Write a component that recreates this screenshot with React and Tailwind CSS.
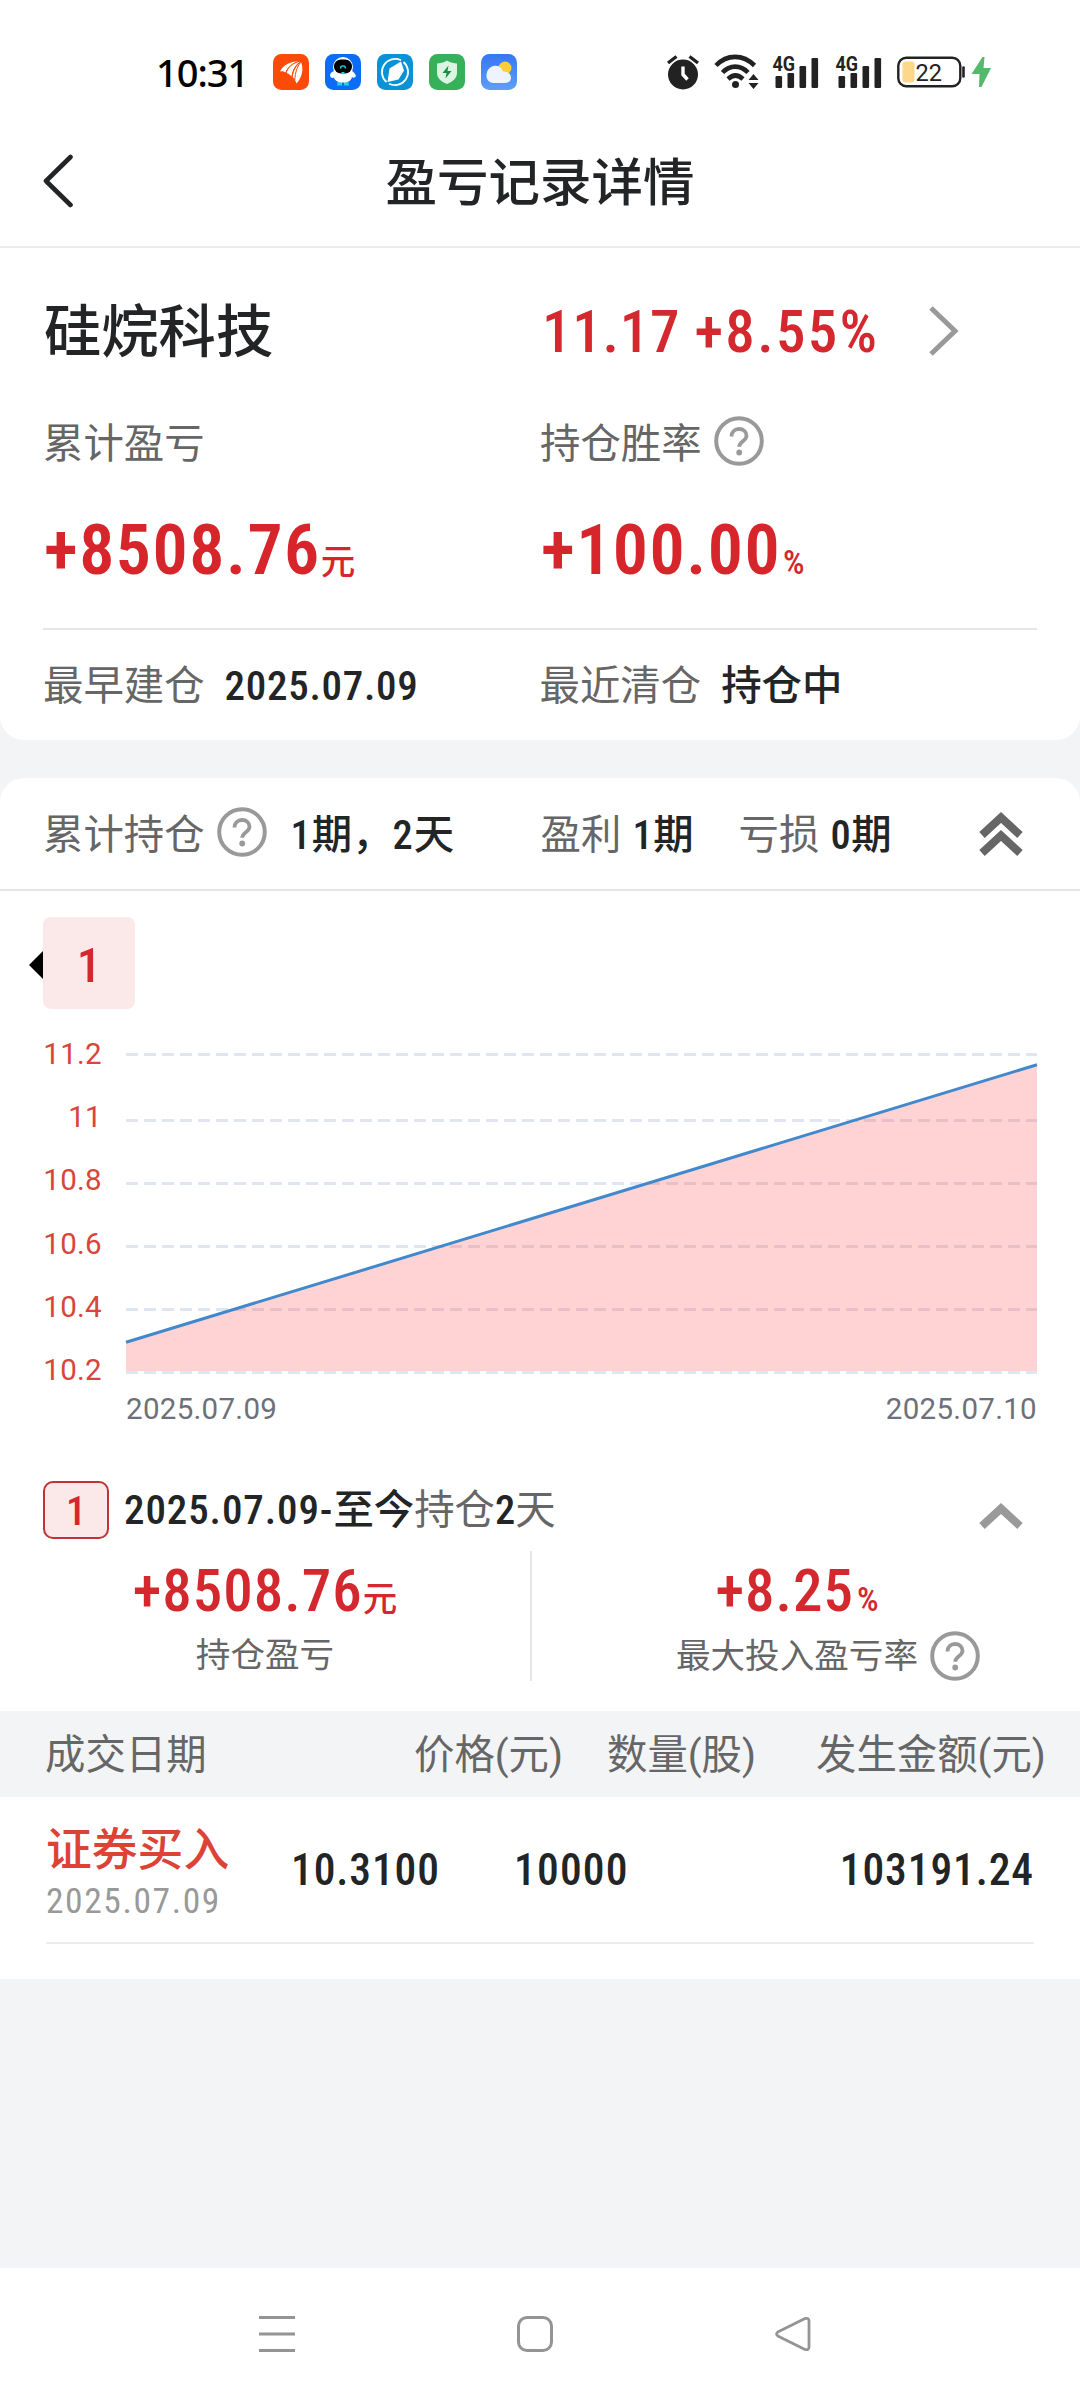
const grid = [
  { label: "11.2", y: 45.5 },
  { label: "11", y: 111.5 },
  { label: "10.8", y: 174.5 },
  { label: "10.6", y: 237.5 },
  { label: "10.4", y: 300.5 },
  { label: "10.2", y: 363.5 },
];

const trades = [
  {
    type: "证券买入",
    date: "2025.07.09",
    price: "10.3100",
    count: "10000",
    amount: "103191.24",
  },
];

// narrow digits used for prices, dates and counts
function Num({ className = "", children }) {
  return <span className={`font-[family-name:'Roboto_Condensed',Roboto,sans-serif] ${className}`}>{children}</span>;
}

function HelpIcon({ className = "" }) {
  return (
    <svg width="50" height="50" viewBox="0 0 50 50" fill="none" className={`shrink-0 ${className}`}>
      <circle cx="25" cy="25" r="22.8" stroke="#999" strokeWidth="4" />
      <path d="M17.5 20.5c0-4.6 3.2-7.500 7.500-7.500s7.500 2.800 7.500 6.800c0 5.400-7.300 5.600-7.300 11" stroke="#999" strokeWidth="3.800" />
      <circle cx="25.200" cy="36.500" r="2.900" fill="#999" />
    </svg>
  );
}

function Signal({ className = "" }) {
  return (
    <svg width="48" height="50" viewBox="0 -8 48 50" className={className}>
      <g fill="#222">
        <rect x="3.500" y="21" width="6.6" height="12" rx="1.2" />
        <rect x="15.500" y="18" width="6.6" height="15" rx="1.2" />
        <rect x="27.500" y="11" width="6.6" height="22" rx="1.2" />
        <rect x="39.500" y="3" width="6.6" height="30" rx="1.2" />
        <text x="0.500" y="16" fontSize="21" fontWeight="700" textLength="22.500" lengthAdjust="spacingAndGlyphs">4G</text>
      </g>
    </svg>
  );
}

function StatusBar() {
  return (
    <div className="flex items-center h-[115px] pt-[29px]">
      <span className="ml-[156px] w-[117px] text-[38px] leading-none font-medium tracking-[-1px] text-black font-[family-name:'Noto_Sans',sans-serif]">
        10:31
      </span>
      <div className="flex gap-4">
        <svg width="36" height="36" viewBox="0 0 36 36">
          <rect width="36" height="36" rx="8.5" fill="#fc4a08" />
          <g fill="#fff">
            <path d="M7 17.500C10 11 17 7.500 26 7.200C19 9.500 14.500 13 12.500 18.500C10.500 17.200 9 17 7 17.500z" />
            <path d="M13.500 19C15.500 13 20 9.300 27 7.600C22 11.500 19.500 16 18.500 22.500C17 20.500 15.500 19.500 13.500 19z" />
            <path d="M19.500 23C20.500 16.500 23 11.500 28 8C31 15 29 23.500 23.500 29.500C22.500 26.500 21.500 24.500 19.500 23z" />
          </g>
          <g stroke="#fc4a08" strokeWidth="1" fill="none">
            <path d="M21.800 26C22.300 18 24 13 27.600 8.500" />
            <path d="M12.800 19C15 13 19 9.500 26 7.300M19 23C20 16 23 11 27.500 8" />
          </g>
        </svg>
        <svg width="36" height="36" viewBox="0 0 36 36">
          <rect width="36" height="36" rx="8.5" fill="#0b6cf5" />
          <path d="M13 26h4v5.500h-5zM19 26h4l1 5.500h-5z" fill="#22d3e0" />
          <path d="M5 21c1-3 3-4 5-4h16c2 0 4 2 5 5-1 2-3 2-4 1-1 4-4 5.500-9 5.500S10 27 9 23.500c-2 1-4 0-4-2.500z" fill="#fff" />
          <circle cx="18" cy="13" r="10" fill="#fff" />
          <rect x="9" y="5.500" width="18" height="14" rx="6.800" fill="#000" />
          <path d="M15.500 14.500c0-3.500 5-3.500 5 0" stroke="#22d3e0" strokeWidth="1.400" fill="none" />
          <rect x="16.500" y="18" width="3" height="2.200" fill="#22d3e0" />
        </svg>
        <svg width="36" height="36" viewBox="0 0 36 36">
          <rect width="36" height="36" rx="8.5" fill="#0a92d6" />
          <path d="M24 6.200A13.200 13.200 0 0 0 9.500 28M12 29.800A13.200 13.200 0 0 0 26.500 8" stroke="#fff" strokeWidth="1.800" fill="none" />
          <path d="M24 7.500L27 16.500 21.500 25.500 10.500 28 12.500 14.500z" fill="#fff" />
        </svg>
        <svg width="36" height="36" viewBox="0 0 36 36">
          <rect width="36" height="36" rx="8.5" fill="#36b15a" />
          <path d="M18 6.500c3.500 2.300 7 3 10 3V19c0 5-4 8.500-10 11C12 27.500 8 24 8 19V9.500c3 0 6.500-.7 10-3z" fill="#dbf5e2" />
          <path d="M19.500 11.500L13.500 19h4l-1 5.500 6-7.500h-4z" fill="#169142" />
        </svg>
        <svg width="36" height="36" viewBox="0 0 36 36">
          <defs>
            <linearGradient id="sky" x1="0" y1="0" x2="0" y2="1">
              <stop offset="0" stopColor="#3675f3" />
              <stop offset="1" stopColor="#5d9ff7" />
            </linearGradient>
          </defs>
          <rect width="36" height="36" rx="8.5" fill="url(#sky)" />
          <circle cx="24" cy="14" r="6.500" fill="#fdcf35" />
          <path d="M12 29a7 7 0 0 1-6.500-8C6 14 11 11.500 15 11.700c4 .2 6 3 7 5.800 4-.5 8 2 8 6S27 29 24 29z" fill="#eef3fd" />
        </svg>
      </div>
      <svg width="34" height="36" viewBox="0 0 34 36" className="ml-[149px]">
        <circle cx="17" cy="20.500" r="15" fill="#222" />
        <path d="M2 9l8.500-6.500M32 9l-8.500-6.500" stroke="#222" strokeWidth="3.400" />
        <path d="M17 12.500v8l4.500 5" stroke="#fff" strokeWidth="3.400" fill="none" />
      </svg>
      <svg width="46" height="36" viewBox="0 0 46 36" className="ml-[14px]">
        <g stroke="#222" strokeWidth="4.600" fill="none">
          <path d="M2 11.500C13 0 29 0 40.500 11.500" />
          <path d="M8.500 18.500C16 10.700 26.500 10.700 34 18.500" />
          <path d="M14 25C19 20.300 24 20.300 29 25" />
        </g>
        <circle cx="21.500" cy="30.500" r="3.500" fill="#222" />
        <path d="M39.500 20l5 6h-10zM39.500 35l5-6h-10z" fill="#222" />
      </svg>
      <Signal className="ml-[12px]" />
      <Signal className="ml-[15px]" />
      <svg width="96" height="34" viewBox="0 0 96 34" className="ml-[14px]">
        <rect x="1.300" y="2.800" width="62" height="28.500" rx="8" fill="none" stroke="#222" strokeWidth="2.400" />
        <rect x="5.500" y="6.500" width="12" height="21" rx="3" fill="#fdd88a" />
        <path d="M66.500 12.500v9" stroke="#222" strokeWidth="2.600" strokeLinecap="round" />
        <text x="18.500" y="26" fontSize="24.500" fill="#222" textLength="26.500" lengthAdjust="spacingAndGlyphs">22</text>
        <path d="M85.500 2L74.500 19h8l-.5 13h2.500L94 13h-7.500l1-11z" fill="#53b96b" />
      </svg>
    </div>
  );
}

function ProfitChart() {
  return (
    <svg width="1080" height="460" viewBox="0 0 1080 460" className="block">
      {grid.map(({ label, y }) => (
        <path key={label} d={`M126 ${y}H1037`} stroke="#e0e6f1" strokeWidth="3" strokeDasharray="12 6" />
      ))}
      <path d="M126 333.300L1037 55.700V362H126z" fill="rgb(255 35 35 / 0.2)" />
      <path d="M126 333.300L1037 55.700" stroke="#4189cc" strokeWidth="3" />
      <g fontSize="29.500" fill="#d8453b" textAnchor="end" letterSpacing="0.300">
        {grid.map(({ label }, i) => (
          <text key={label} x="102" y={55 + i * 63.200}>
            {label}
          </text>
        ))}
      </g>
      <g fontSize="29.500" fill="#6e7079" letterSpacing="0.300">
        <text x="126" y="409.500">2025.07.09</text>
        <text x="1037" y="409.500" textAnchor="end">2025.07.10</text>
      </g>
    </svg>
  );
}

export default function App() {
  return (
    <div className="w-[1080px] h-[2400px] flex flex-col overflow-hidden bg-[#f3f4f6] text-[40.4px] leading-none whitespace-nowrap text-[#222426] font-[family-name:Roboto,'Noto_Sans_CJK_SC',sans-serif]">
      <div className="bg-white">
        <StatusBar />
        <header className="grid grid-cols-[1fr_auto_1fr] items-center h-[133px] border-b-2 border-[#ebebeb]">
          <svg width="32" height="54" viewBox="0 0 32 54" fill="none" className="ml-[42px]">
            <path d="M28.500 3L4 27l24.500 24" stroke="#222426" strokeWidth="4.600" strokeLinecap="round" strokeLinejoin="round" />
          </svg>
          <h1 className="pt-[7px] text-[51.500px] font-medium">盈亏记录详情</h1>
        </header>
      </div>

      <section className="bg-white rounded-b-[24px] h-[492px] px-[43px]">
        <div className="flex items-center h-[166px]">
          <span className="pt-1 pl-px w-[499px] text-[57.300px] font-medium">硅烷科技</span>
          <div className="w-[387px] text-[59px] font-medium text-[#d3292e]">
            <Num className="tracking-[0.800px]">11.17</Num>
            <Num className="ml-[14px] tracking-[2.300px]">+8.55%</Num>
          </div>
          <svg width="30" height="50" viewBox="0 0 30 50" fill="none">
            <path d="M2 2l24 23L2 48" stroke="#999" strokeWidth="5" />
          </svg>
        </div>
        <div className="flex items-center h-[54px] text-[#666]">
          <span className="pt-[9px] w-[497px]">累计盈亏</span>
          <span className="pt-[9px]">持仓胜率</span>
          <HelpIcon className="ml-[12px]" />
        </div>
        <div className="flex items-center h-[156px] pt-1 pl-px border-b-2 border-[#e5e5e5] text-[#d7262b] box-content w-[993px]">
          <div className="w-[497px]">
            <Num className="text-[70px] font-semibold tracking-[1.500px]">+8508.76</Num>
            <span className="text-[34.500px] font-medium">元</span>
          </div>
          <div>
            <Num className="text-[70px] font-semibold tracking-[1.500px]">+100.00</Num>
            <Num className="text-[34px] font-medium ml-[2px]">%</Num>
          </div>
        </div>
        <div className="flex items-center h-[110px] pt-[5px]">
          <span className="text-[#666]">最早建仓</span>
          <Num className="mb-0.5 ml-[20px] w-[315px] text-[41px] font-medium tracking-[0.700px]">2025.07.09</Num>
          <span className="text-[#666]">最近清仓</span>
          <span className="ml-[20px] font-medium">持仓中</span>
        </div>
      </section>

      <section className="mt-[38px] bg-white rounded-t-[24px] h-[1201px]">
        <div className="flex items-center h-[113px] pl-[43px] border-b-2 border-[#e5e5e5]">
          <span className="pt-[5px] text-[#666]">累计持仓</span>
          <HelpIcon className="ml-[12px] mb-[3px]" />
          <span className="pt-[5px] ml-[24px] w-[250px] font-medium">
            <Num className="tracking-[1px]">1</Num>期，<Num className="tracking-[1px]">2</Num>天
          </span>
          <span className="pt-[5px] w-[92px] text-[#666]">盈利</span>
          <span className="pt-[5px] w-[106px] font-medium">
            <Num className="tracking-[0.500px]">1</Num>期
          </span>
          <span className="pt-[5px] w-[92px] text-[#666]">亏损</span>
          <span className="pt-[5px] w-[148px] font-medium">
            <Num className="tracking-[0.500px]">0</Num>期
          </span>
          <svg width="44" height="44" viewBox="0 0 44 44" fill="none" stroke="#666" strokeWidth="8">
            <path d="M3 23L22 5.500 41 23M3 41L22 23.500 41 41" />
          </svg>
        </div>

        <div className="flex items-center pt-[26px] pl-[29px]">
          <svg width="14" height="28" viewBox="0 0 14 28" className="mt-1">
            <path d="M14 0v28L0 14z" fill="#000" />
          </svg>
          <div className="w-[92px] h-[92px] pt-1 rounded-lg bg-[#fbe9e9] flex items-center justify-center text-[49px] font-medium text-[#d3292e]">
            <Num>1</Num>
          </div>
        </div>

        <ProfitChart />

        <div className="flex items-center h-[82px] pl-[43px]">
          <div className="w-[66px] h-[58px] pt-1 rounded-[10px] border-2 border-[#bf3238] bg-[#fbe9e9] flex items-center justify-center font-medium text-[#d3292e]">
            <Num>1</Num>
          </div>
          <span className="pt-0.5 ml-[15px] w-[855px] font-medium">
            <Num className="text-[41px] tracking-[0.900px]">2025.07.09-</Num>至今
            <span className="font-normal text-[#666]">持仓</span>
            <Num>2</Num>
            <span className="font-normal text-[#666]">天</span>
          </span>
          <svg width="44" height="28" viewBox="0 0 44 28" fill="none" stroke="#999" strokeWidth="8" className="mt-3">
            <path d="M3 24L22 6.500 41 24" />
          </svg>
        </div>

        <div className="flex h-[130px]">
          <div className="w-[530px] flex flex-col items-center text-[#d3292e]">
            <div className="h-[80px] leading-[80px]">
              <Num className="text-[59px] font-medium tracking-[1px]">+8508.76</Num>
              <span className="text-[34.500px] font-medium">元</span>
            </div>
            <span className="mt-[7px] text-[34.600px] text-[#666]">持仓盈亏</span>
          </div>
          <div className="w-[2px] bg-[#e5e5e5]" />
          <div className="w-[530px] flex flex-col items-center text-[#d3292e]">
            <div className="h-[80px] leading-[80px]">
              <Num className="text-[59px] font-medium tracking-[1px]">+8.25</Num>
              <Num className="text-[34px] font-medium ml-[3px]">%</Num>
            </div>
            <div className="flex items-center ml-[62px] text-[34.600px] text-[#666]">
              <span>最大投入盈亏率</span>
              <HelpIcon className="ml-[12px]" />
            </div>
          </div>
        </div>

        <div className="mt-[30px] h-[86px] pt-[5px] flex items-center pl-[45px] bg-[#f3f4f6] text-[#666]">
          <span className="w-[369px]">成交日期</span>
          <span className="w-[193px]">价格(元)</span>
          <span className="w-[209px]">数量(股)</span>
          <span>发生金额(元)</span>
        </div>
        {trades.map((t) => (
          <div key={t.type} className="mx-[46px] h-[147px] flex items-center border-b-2 border-[#ededed] text-[43.500px] font-medium">
            <div className="w-[245px] pt-[8px]">
              <div className="text-[45.800px] text-[#dd4237]">{t.type}</div>
              <Num className="block mt-[10px] text-[35.500px] font-normal tracking-[1.600px] text-[#999]">{t.date}</Num>
            </div>
            <Num className="pt-[3px] w-[223px] tracking-[0.900px]">{t.price}</Num>
            <Num className="pt-[3px] tracking-[1.200px]">{t.count}</Num>
            <Num className="pt-[3px] ml-auto tracking-[0.900px]">{t.amount}</Num>
          </div>
        ))}
      </section>

      <nav className="mt-auto h-[132px] bg-white flex items-center justify-between pl-[258px] pr-[268px]">
        <svg width="38" height="38" viewBox="0 0 38 38">
          <path d="M1 2.500h36M1 19h36M1 35.500h36" stroke="#949494" strokeWidth="3" />
        </svg>
        <svg width="38" height="38" viewBox="0 0 38 38" fill="none">
          <rect x="2.500" y="2.500" width="33" height="33" rx="8.500" stroke="#949494" strokeWidth="3" />
        </svg>
        <svg width="38" height="38" viewBox="0 0 38 38" fill="none">
          <path d="M31 3.500L3.800 17q-2.500 2 0 4L31 34.500q4 1 4-2.500V6q0-3.500-4-2.500z" stroke="#949494" strokeWidth="2.800" strokeLinejoin="round" />
        </svg>
      </nav>
    </div>
  );
}
